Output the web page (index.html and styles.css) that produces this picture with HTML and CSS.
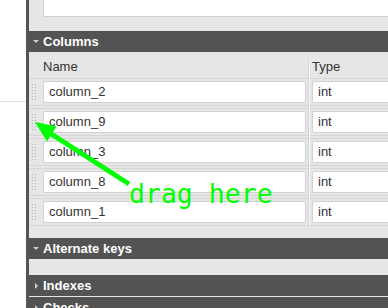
FILE: index.html
```html
<!DOCTYPE html>
<html>
<head>
<meta charset="utf-8">
<link rel="stylesheet" href="styles.css">
</head>
<body>
<div class="page">
  <div class="side"><div class="side-line"></div></div>
  <div class="panel">
    <div class="topbox"></div>
    <div class="sec-head open">Columns</div>
    <div class="cols">
      <div class="thead">
        <div class="h-handle"></div>
        <div class="h-name">Name</div>
        <div class="h-type">Type</div>
      </div>
      <div class="row"><div class="c-handle"><div class="dots"></div></div><div class="c-name"><div class="inp">column_2</div></div><div class="c-type"><div class="inp">int</div></div></div>
      <div class="row"><div class="c-handle"><div class="dots"></div></div><div class="c-name"><div class="inp">column_9</div></div><div class="c-type"><div class="inp">int</div></div></div>
      <div class="row"><div class="c-handle"><div class="dots"></div></div><div class="c-name"><div class="inp">column_3</div></div><div class="c-type"><div class="inp">int</div></div></div>
      <div class="row"><div class="c-handle"><div class="dots"></div></div><div class="c-name"><div class="inp">column_8</div></div><div class="c-type"><div class="inp">int</div></div></div>
      <div class="row"><div class="c-handle"><div class="dots"></div></div><div class="c-name"><div class="inp">column_1</div></div><div class="c-type"><div class="inp">int</div></div></div>
    </div>
    <div class="sec-head open">Alternate keys</div>
    <div class="sec-body"></div>
    <div class="sec-head closed gap">Indexes</div>
    <div class="sec-head closed">Checks</div>
  </div>
</div>
<svg class="overlay" width="388" height="308" viewBox="0 0 388 308">
  <line x1="129" y1="184" x2="49" y2="132.5" stroke="#00ff00" stroke-width="5"/>
  <polygon points="35,122 46.9,141.4 56.7,126.2" fill="#00ff00"/>
  <text class="drag" x="129" y="203">drag here</text>
</svg>
</body>
</html>
```

FILE: styles.css
```css
html, body {
  margin: 0;
  padding: 0;
}
body {
  width: 388px;
  height: 308px;
  overflow: hidden;
  background: #fff;
  font-family: "Liberation Sans", Arial, sans-serif;
  font-size: 13px;
  color: #333;
  position: relative;
}
.page {
  display: flex;
  height: 308px;
}
.side {
  width: 26px;
  flex: none;
}
.side-line {
  height: 101px;
  border-bottom: 1px solid #e0e0e0;
}
.panel {
  flex: 1;
  min-width: 0;
  border-left: 3px solid #555;
  background: #e6e6e6;
  overflow: hidden;
}
.topbox {
  margin-left: 14px;
  height: 16px;
  background: #fff;
  border-left: 1px solid #cfcfcf;
  border-bottom: 1px solid #cfcfcf;
  margin-bottom: 14px;
}
.sec-head {
  display: flex;
  align-items: center;
  height: 21px;
  background: #535353;
  color: #fff;
  font-weight: bold;
  white-space: nowrap;
}
.sec-head::before {
  content: "";
  width: 0;
  height: 0;
}
.open::before {
  margin: 0 4px 0 4px;
  border-left: 3px solid transparent;
  border-right: 3px solid transparent;
  border-top: 3px solid #cfcfcf;
}
.closed::before {
  margin: 0 5px 0 6px;
  border-top: 3px solid transparent;
  border-bottom: 3px solid transparent;
  border-left: 3px solid #cfcfcf;
}
.gap {
  margin-bottom: 1px;
}
.sec-body {
  height: 16px;
}
.cols {
  margin-bottom: 10px;
}
.thead {
  display: grid;
  grid-template-columns: 12px 268px 1fr;
  padding-top: 6px;
}
.thead > div {
  padding: 1px 0 3px;
  line-height: 16px;
}
.thead .h-name {
  padding-left: 2px;
  border-right: 1px solid #d4d4d4;
}
.thead .h-type {
  padding-left: 2px;
  border-left: 1px solid #f6f6f6;
}
.row {
  display: grid;
  grid-template-columns: 12px 268px 1fr;
  height: 30px;
  background:
    linear-gradient(#d6d6d6, #d6d6d6) 0 0 / 100% 1px no-repeat,
    linear-gradient(#d6d6d6, #d6d6d6) 0 27px / 100% 1px no-repeat;
}
.row > div {
  padding-top: 3px;
}
.c-handle {
  padding-left: 3px;
}
.dots {
  margin-top: 3px;
  width: 5px;
  height: 17px;
  background: conic-gradient(at 1px 1px, transparent 75%, #b4b4b4 0) 0 0 / 3px 3px;
}
.c-name {
  padding-left: 2px;
  padding-right: 2px;
  border-right: 1px solid #d4d4d4;
}
.c-type {
  padding-left: 2px;
  border-left: 1px solid #f6f6f6;
}
.inp {
  box-sizing: border-box;
  height: 22px;
  background: #fff;
  border: 1px solid #d2d2d2;
  border-radius: 2px;
  padding-left: 5px;
  line-height: 20px;
  white-space: nowrap;
  color: #333;
}
.c-type .inp {
  margin-right: -10px;
}
.overlay {
  position: absolute;
  left: 0;
  top: 0;
  pointer-events: none;
}
.drag {
  font-family: "DejaVu Sans Mono", monospace;
  font-size: 26.5px;
  fill: #00ff00;
}
```
